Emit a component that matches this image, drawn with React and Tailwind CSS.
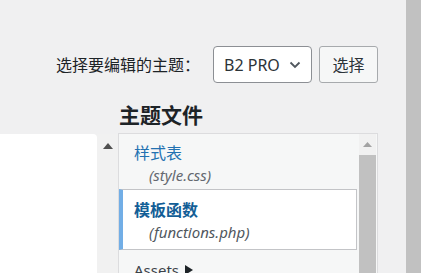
import React from "react";

const font = { fontFamily: '"Noto Sans", "Noto Sans CJK SC", sans-serif' };

export default function App() {
  return (
    <div
      className="flex h-[273px] w-[421px] overflow-hidden bg-[#f0f0f1] text-[#1d2327]"
      style={font}
    >
      <div className="flex w-[406px] flex-col">
        <div className="mt-[46px] flex items-center justify-end pr-[28px]">
          <span className="mr-[13px] text-[16px] leading-[22px] text-[#1d2327]">
            选择要编辑的主题：
          </span>
          <div className="flex h-[37px] w-[99px] items-center justify-between rounded-[4px] border border-[#8c8f94] bg-white pl-[10px] pr-[10px]">
            <span className="text-[16px] leading-[22px] text-[#2c3338]">B2 PRO</span>
            <svg width="12" height="8" viewBox="0 0 12 8" className="mt-[1px]">
              <path d="M1.5 1.5 L6 6 L10.5 1.5" fill="none" stroke="#50575e" strokeWidth="1.8" />
            </svg>
          </div>
          <div className="ml-[7px] flex h-[37px] w-[59px] items-center justify-center rounded-[3px] border border-[#a7aaad] bg-[#f6f7f7] text-[16px] leading-[22px] text-[#2c3338]">
            选择
          </div>
        </div>
        <div className="mt-[18px] pl-[119px] text-[21px] font-bold leading-[28px] text-[#1d2327]">
          主题文件
        </div>
        <div className="mt-[4px] flex flex-1">
          <div className="mt-[1px] w-[97px] rounded-tr-[4px] bg-white" />
          <div className="mt-[1px] flex w-[21px] justify-center bg-[#f1f1f1] pt-[9px]">
            <svg width="10" height="6" viewBox="0 0 10 6">
              <path d="M0 6 L5 0 L10 6 Z" fill="#505050" />
            </svg>
          </div>
          <div className="flex w-[260px] border border-[#dcdcde] bg-[#f6f7f7]">
            <div className="w-[240px]">
              <div className="pb-[3px] pl-[15px] pt-[8px]">
                <div className="text-[16px] leading-[22px] text-[#2271b1]">样式表</div>
                <div className="pl-[15px] text-[15px] italic leading-[22px] text-[#646970]">
                  (style.css)
                </div>
              </div>
              <div className="mr-[2px] border border-l-4 border-[#c3c4c7] border-l-[#72aee6] bg-white pb-[6px] pl-[11px] pt-[9px]">
                <div className="text-[16px] font-bold leading-[22px] text-[#135e96]">模板函数</div>
                <div className="pl-[15px] text-[15px] italic leading-[22px] text-[#50575e]">
                  (functions.php)
                </div>
              </div>
              <div className="flex items-center pl-[15px] pt-[9px] text-[15px] leading-[22px] text-[#3c434a]">
                Assets
                <svg width="8" height="10" viewBox="0 0 8 10" className="ml-[6px]">
                  <path d="M0 0 L8 5 L0 10 Z" fill="#1d2327" />
                </svg>
              </div>
            </div>
            <div className="flex w-[17px] flex-col">
              <div className="flex h-[21px] items-center justify-center bg-[#f1f1f1]">
                <svg width="9" height="5" viewBox="0 0 9 5">
                  <path d="M0 5 L4.5 0 L9 5 Z" fill="#a3a3a3" />
                </svg>
              </div>
              <div className="flex-1 bg-[#c1c1c1]" />
            </div>
          </div>
        </div>
      </div>
      <div className="w-[15px] bg-[#c1c1c1]" />
    </div>
  );
}
